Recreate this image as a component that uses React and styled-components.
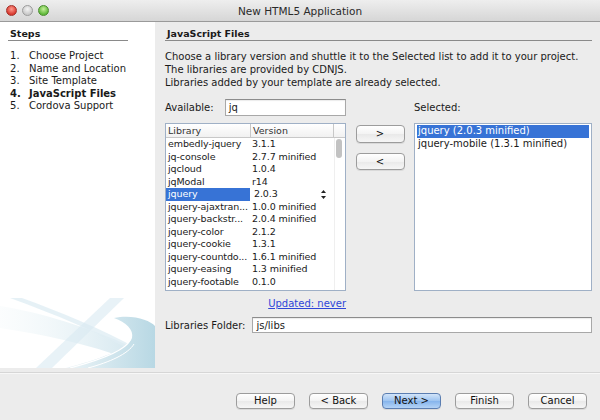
import React from "react";
import styled, { createGlobalStyle } from "styled-components";

const Global = createGlobalStyle`
  html, body { margin: 0; padding: 0; background: #ececec; }
  body { font-family: "DejaVu Sans", "Liberation Sans", sans-serif; font-size: 10px; color: #1a1a1a; }
  * { box-sizing: border-box; }
`;

const Window = styled.div`
  width: 600px;
  height: 420px;
  background: #ececec;
  display: flex;
  flex-direction: column;
  overflow: hidden;
`;

const TitleBar = styled.div`
  height: 22px;
  flex: none;
  display: grid;
  grid-template-columns: 1fr auto 1fr;
  align-items: center;
  background: linear-gradient(#eeeeee, #d6d6d6);
  border-bottom: 1px solid #9a9a9a;
`;

const Lights = styled.div`
  display: flex;
  gap: 5px;
  padding-left: 6px;
`;

const Light = styled.span`
  width: 11px;
  height: 11px;
  border-radius: 50%;
  border: 1px solid ${(p) => p.$edge};
  background: radial-gradient(circle at 50% 35%, ${(p) => p.$hi} 0%, ${(p) => p.$c} 70%);
`;

const Title = styled.div`
  font-size: 10.5px;
  color: #2a2a2a;
`;

const Main = styled.div`
  flex: none;
  height: 346px;
  display: flex;
`;

const Sidebar = styled.div`
  width: 155px;
  flex: none;
  background: #fff;
  display: flex;
  flex-direction: column;
  padding: 5px 0 0 8px;
`;

const SectionHead = styled.div`
  font-weight: bold;
  font-size: 9.5px;
  line-height: 13px;
  padding-left: 2px;
  border-bottom: 1px solid #8a8a8a;
  width: ${(p) => p.$w || "auto"};
`;

const StepList = styled.ol`
  list-style: none;
  margin: 9px 0 0 0;
  padding: 0 0 0 2px;
`;

const Step = styled.li`
  display: flex;
  line-height: 12.6px;
  font-weight: ${(p) => (p.$active ? "bold" : "normal")};
  & > span:first-child { width: 19px; }
`;

const Wave = styled.svg`
  margin-top: auto;
  margin-left: -8px;
  display: block;
`;

const Content = styled.div`
  flex: 1;
  padding: 5px 8px 0 10px;
  display: flex;
  flex-direction: column;
`;

const Desc = styled.p`
  margin: 9px 0 0 0;
  line-height: 13px;
`;

const Shuttle = styled.div`
  margin-top: 10px;
  display: grid;
  grid-template-columns: 181px 1fr 178px;
  grid-template-rows: 17px 169px 13px;
  row-gap: 6px;
  & > :nth-child(4), & > :nth-child(5), & > :nth-child(6) { margin-top: 1px; }
`;

const FieldRow = styled.div`
  display: flex;
  align-items: center;
  gap: ${(p) => p.$gap || 8}px;
`;

const TextField = styled.div`
  height: ${(p) => p.$h || 17}px;
  flex: 1;
  background: #fff;
  border: 1px solid #a8a8a8;
  border-top-color: #8c8c8c;
  box-shadow: inset 0 1px 1px rgba(0,0,0,0.08);
  padding: 0 3px;
  display: flex;
  align-items: center;
`;

const Label = styled.span`
  line-height: 13px;
  align-self: ${(p) => p.$self || "auto"};
`;

const Table = styled.div`
  background: #fff;
  border: 1px solid #9fb0c6;
  display: grid;
  grid-template-columns: 1fr 11px;
  grid-template-rows: 14px 1fr;
  overflow: hidden;
  font-size: 9.5px;
`;

const Header = styled.div`
  display: grid;
  grid-template-columns: 84px 1fr;
  background: linear-gradient(#ffffff, #f1f1f1);
  border-bottom: 1px solid #c8c8c8;
  & > span { padding-left: 2px; line-height: 13px; color: #333; }
  & > span + span { border-left: 1px solid #c8c8c8; border-right: 1px solid #c8c8c8; }
`;

const HeaderCorner = styled.div`
  background: linear-gradient(#ffffff, #f1f1f1);
  border-bottom: 1px solid #c8c8c8;
`;

const Rows = styled.div`
  overflow: hidden;
`;

const Row = styled.div`
  display: grid;
  grid-template-columns: 84px 1fr;
  height: 12.5px;
  line-height: 12.5px;
  white-space: nowrap;
`;

const Cell = styled.span`
  padding-left: ${(p) => (p.$editing ? 4 : 2)}px;
  overflow: hidden;
  letter-spacing: -0.1px;
  background: ${(p) => (p.$sel ? "#3773d6" : "transparent")};
  color: ${(p) => (p.$sel ? "#fff" : "inherit")};
  display: flex;
  align-items: center;
  justify-content: space-between;
`;

const Spinner = styled.svg`
  margin-right: 8px;
  display: block;
`;

const ScrollTrack = styled.div`
  border-left: 1px solid #efefef;
  padding: 1px 0 0 1px;
`;

const Thumb = styled.div`
  width: 6px;
  height: 19px;
  border-radius: 3px;
  background: #c2c2c2;
`;

const Buttons = styled.div`
  display: flex;
  flex-direction: column;
  align-items: center;
  padding-top: 2px;
  gap: 10px;
`;

const Button = styled.button`
  font-family: inherit;
  font-size: 10px;
  width: ${(p) => p.$w || 59}px;
  height: ${(p) => p.$h || 16}px;
  padding: 0;
  border-radius: 4px;
  border: 1px solid ${(p) => (p.$primary ? "#5b7eb1" : "#9c9c9c")};
  background: ${(p) =>
    p.$primary
      ? "linear-gradient(#d2e4f9, #9cc3f0 50%, #85b4ec 51%, #b4d3f6)"
      : "linear-gradient(#ffffff, #f3f3f3 50%, #e9e9e9 51%, #f6f6f6)"};
  color: #111;
  box-shadow: 0 1px 0 rgba(0,0,0,0.08);
  line-height: 1;
`;

const List = styled.div`
  background: #fff;
  border: 1px solid #9fb0c6;
  padding: 1px 2px;
`;

const ListItem = styled.div`
  height: 12.5px;
  line-height: 12.5px;
  padding-left: 1px;
  background: ${(p) => (p.$sel ? "#3773d6" : "transparent")};
  color: ${(p) => (p.$sel ? "#fff" : "inherit")};
`;

const Link = styled.a`
  justify-self: end;
  color: #2f46d8;
  text-decoration: underline;
  line-height: 13px;
`;

const FolderRow = styled(FieldRow)`
  margin-top: 7px;
`;

const Separator = styled.div`
  margin-top: 4px;
  height: 2px;
  border-top: 1px solid #d6d6d6;
  border-bottom: 1px solid #f7f7f7;
`;

const Footer = styled.div`
  display: flex;
  justify-content: flex-end;
  gap: 14px;
  padding: 19px 13px 0 0;
`;

const libs = [
  ["embedly-jquery", "3.1.1"],
  ["jq-console", "2.7.7 minified"],
  ["jqcloud", "1.0.4"],
  ["jqModal", "r14"],
  ["jquery", "2.0.3", true],
  ["jquery-ajaxtran...", "1.0.0 minified"],
  ["jquery-backstr...", "2.0.4 minified"],
  ["jquery-color", "2.1.2"],
  ["jquery-cookie", "1.3.1"],
  ["jquery-countdo...", "1.6.1 minified"],
  ["jquery-easing", "1.3 minified"],
  ["jquery-footable", "0.1.0"],
  ["jquery-form", "3.1.6"],
];

const steps = ["Choose Project", "Name and Location", "Site Template", "JavaScript Files", "Cordova Support"];

export default function App() {
  return (
    <Window>
      <Global />
      <TitleBar>
        <Lights>
          <Light $c="#d8392f" $hi="#ff9b8f" $edge="#a2312a" />
          <Light $c="#c9c9c9" $hi="#f4f4f4" $edge="#9b9b9b" />
          <Light $c="#5fb83a" $hi="#c6f09a" $edge="#4b8c2f" />
        </Lights>
        <Title>New HTML5 Application</Title>
        <span />
      </TitleBar>
      <Main>
        <Sidebar>
          <SectionHead $w="120px">Steps</SectionHead>
          <StepList>
            {steps.map((s, i) => (
              <Step key={s} $active={i === 3}>
                <span>{i + 1}.</span>
                <span>{s}</span>
              </Step>
            ))}
          </StepList>
          <Wave width="155" height="70" viewBox="0 0 155 70">
            <defs>
              <linearGradient id="fadeR" x1="0" y1="0" x2="1" y2="0">
                <stop offset="0" stopColor="#f2f8fa" stopOpacity="0.3" />
                <stop offset="1" stopColor="#d2e6ee" stopOpacity="0.9" />
              </linearGradient>
              <linearGradient id="swoosh" x1="0" y1="0" x2="1" y2="0">
                <stop offset="0" stopColor="#ecf4f7" />
                <stop offset="1" stopColor="#b8d8e4" />
              </linearGradient>
            </defs>
            <path d="M0 8 C40 14 90 30 130 48 L130 62 C90 46 40 36 0 30 Z" fill="url(#fadeR)" />
            <path d="M10 0 L22 0 C60 14 100 30 140 52 L136 55 C96 33 56 17 10 0 Z" fill="#e0eef4" opacity="0.8" />
            <path d="M110 0 L124 0 L52 70 L36 70 Z" fill="#d9eaf1" opacity="0.6" />
            <path d="M114 20 C132 16 150 22 155 28 L155 70 L66 70 C96 62 128 52 132 40 C134 32 126 24 114 20 Z" fill="url(#swoosh)" />
            <path d="M70 70 C100 62 126 52 130 42" stroke="#ffffff" strokeWidth="1.2" fill="none" />
            <path d="M88 70 C110 64 128 56 134 46" stroke="#ffffff" strokeWidth="1" fill="none" />
          </Wave>
        </Sidebar>
        <Content>
          <SectionHead>JavaScript Files</SectionHead>
          <Desc>
            Choose a library version and shuttle it to the Selected list to add it to your project.
            <br />
            The libraries are provided by CDNJS.
            <br />
            Libraries added by your template are already selected.
          </Desc>
          <Shuttle>
            <FieldRow $gap={11}>
              <Label>Available:</Label>
              <TextField>jq</TextField>
            </FieldRow>
            <span />
            <Label $self="center">Selected:</Label>
            <Table>
              <Header>
                <span>Library</span>
                <span>Version</span>
              </Header>
              <HeaderCorner />
              <Rows>
                {libs.map(([n, v, sel]) => (
                  <Row key={n}>
                    <Cell $sel={sel}>{n}</Cell>
                    <Cell $editing={sel}>
                      {v}
                      {sel && (
                        <Spinner width="5" height="9" viewBox="0 0 5 9">
                          <path d="M2.5 0 L5 3 L0 3 Z" fill="#222" />
                          <path d="M0 6 L5 6 L2.5 9 Z" fill="#222" />
                        </Spinner>
                      )}
                    </Cell>
                  </Row>
                ))}
              </Rows>
              <ScrollTrack>
                <Thumb />
              </ScrollTrack>
            </Table>
            <Buttons>
              <Button $w={49} $h={18}>&gt;</Button>
              <Button $w={49} $h={17}>&lt;</Button>
            </Buttons>
            <List>
              <ListItem $sel>jquery (2.0.3 minified)</ListItem>
              <ListItem>jquery-mobile (1.3.1 minified)</ListItem>
            </List>
            <Link>Updated: never</Link>
          </Shuttle>
          <FolderRow $gap={7}>
            <Label>Libraries Folder:</Label>
            <TextField $h={16}>js/libs</TextField>
          </FolderRow>
        </Content>
      </Main>
      <Separator />
      <Footer>
        <Button>Help</Button>
        <Button>&lt; Back</Button>
        <Button $primary>Next &gt;</Button>
        <Button>Finish</Button>
        <Button>Cancel</Button>
      </Footer>
    </Window>
  );
}
